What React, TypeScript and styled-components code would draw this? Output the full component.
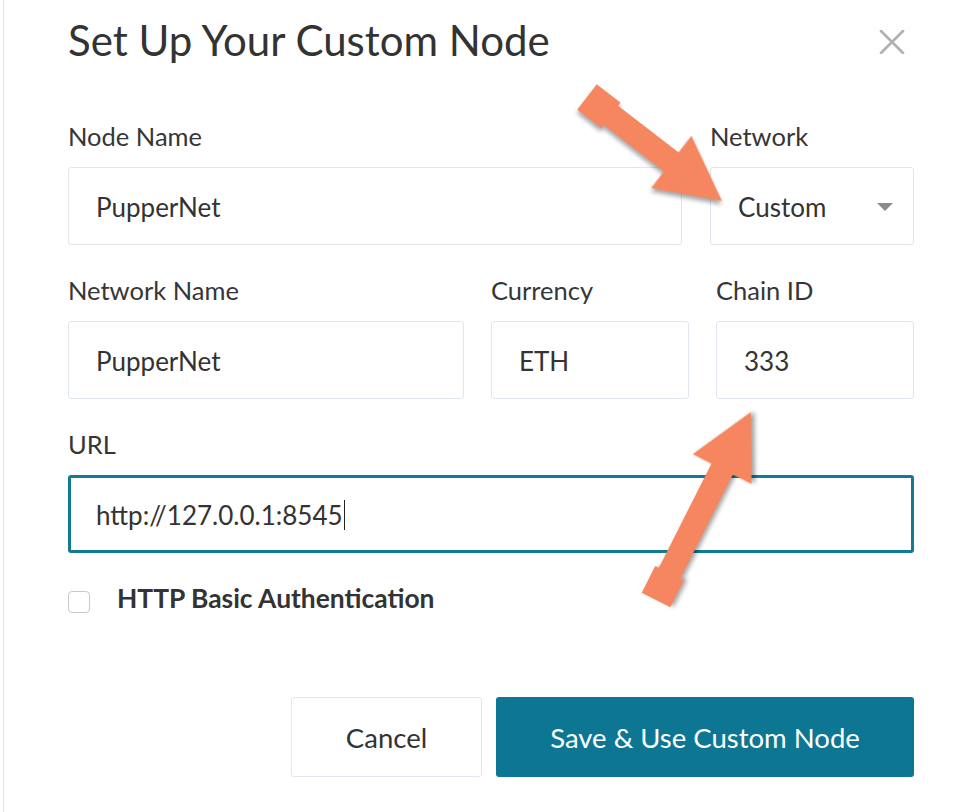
import React from "react";
import styled, { createGlobalStyle } from "styled-components";

const Global = createGlobalStyle`
  html, body { margin: 0; padding: 0; background: #fff; }
  body { font-family: Lato, "Open Sans", sans-serif; color: #333; }
  * { box-sizing: border-box; }
`;

const Page = styled.div`
  position: relative;
  width: 957px;
  height: 812px;
  overflow: hidden;
  background: #fff;
`;

const Modal = styled.div`
  margin-left: 3px;
  height: 100%;
  border-left: 1px solid #e4e4e4;
  padding: 15px 43px 0 64px;
  display: flex;
  flex-direction: column;
`;

const Header = styled.div`
  display: flex;
  justify-content: space-between;
  align-items: flex-start;
  margin-bottom: 56px;
`;

const Title = styled.h1`
  margin: 0;
  font-size: 42px;
  line-height: 50px;
  font-weight: 400;
  color: #333;
`;

const CloseButton = styled.button`
  border: 0;
  background: none;
  padding: 0;
  margin: 15px 9px 0 0;
  width: 26px;
  height: 24px;
  display: flex;
  cursor: pointer;
`;

const Row = styled.div<{ $cols: string; $gap: number }>`
  display: grid;
  grid-template-columns: ${(p) => p.$cols};
  column-gap: ${(p) => p.$gap}px;
  margin-bottom: 30px;
`;

const Group = styled.div`
  display: flex;
  flex-direction: column;
  min-width: 0;
`;

const Label = styled.div`
  font-size: 25.5px;
  line-height: 30px;
  color: #363636;
  margin-bottom: 16px;
`;

const Box = styled.div<{ $focused?: boolean }>`
  height: 78px;
  border: ${(p) => (p.$focused ? "3px solid #137a93" : "1px solid #dfe6ee")};
  border-radius: 3px;
  padding: 2px ${(p) => (p.$focused ? 25 : 27)}px 0;
  display: flex;
  align-items: center;
  justify-content: space-between;
  font-size: 26px;
  line-height: 30px;
  color: #333;
  background: #fff;
`;

const Caret = styled.span`
  display: inline-block;
  width: 1px;
  height: 30px;
  background: #222;
  margin-left: 1px;
  vertical-align: top;
`;

const Triangle = styled.span`
  width: 0;
  height: 0;
  border-left: 8px solid transparent;
  border-right: 8px solid transparent;
  border-top: 8px solid #8a8a8a;
  margin-right: -7px;
`;

const CheckRow = styled.label`
  display: flex;
  align-items: flex-start;
  font-size: 26.4px;
  line-height: 30px;
  font-weight: 700;
  color: #333;
`;

const CheckBox = styled.span`
  width: 22px;
  height: 22px;
  margin-top: 8px;
  margin-right: 27px;
  border: 1.5px solid #c8c8c8;
  border-radius: 4px;
  background: #fff;
`;

const Footer = styled.div`
  display: flex;
  justify-content: flex-end;
  gap: 14px;
  margin-top: 84px;
`;

const Button = styled.button<{ $primary?: boolean; $width: number }>`
  width: ${(p) => p.$width}px;
  height: 80px;
  border-radius: 3px;
  font-family: Lato, "Open Sans", sans-serif;
  font-size: 27.5px;
  cursor: pointer;
  border: ${(p) => (p.$primary ? "none" : "1px solid #e1e7ee")};
  background: ${(p) => (p.$primary ? "#0d7793" : "#fff")};
  color: ${(p) => (p.$primary ? "#fff" : "#333")};
`;

const Overlay = styled.svg`
  position: absolute;
  left: 0;
  top: 0;
  pointer-events: none;
`;

const ArrowShape = styled.polygon`
  fill: #f5865f;
  filter: drop-shadow(2px 3px 2px rgba(0, 0, 0, 0.35));
`;

function arrowPoints(L: number): string {
  const t = 30;
  const tw = 16;
  const sw = 12;
  const h = 64;
  const hw = 33;
  return [
    [0, -tw], [t, -tw], [t, -sw], [L - h, -sw], [L - h, -hw], [L, 0],
    [L - h, hw], [L - h, sw], [t, sw], [t, tw], [0, tw],
  ].map((p) => p.join(",")).join(" ");
}

function Arrow({ x1, y1, x2, y2 }: { x1: number; y1: number; x2: number; y2: number }) {
  const dx = x2 - x1;
  const dy = y2 - y1;
  const L = Math.sqrt(dx * dx + dy * dy);
  const a = (Math.atan2(dy, dx) * 180) / Math.PI;
  return (
    <g transform={`translate(${x1} ${y1}) rotate(${a})`}>
      <ArrowShape points={arrowPoints(L)} />
    </g>
  );
}

function Field({ label, value, focused, select }: { label: string; value: string; focused?: boolean; select?: boolean }) {
  return (
    <Group>
      <Label>{label}</Label>
      <Box $focused={focused}>
        <span>
          {value}
          {focused && <Caret />}
        </span>
        {select && <Triangle />}
      </Box>
    </Group>
  );
}

export default function App() {
  return (
    <>
      <Global />
      <Page>
        <Modal>
          <Header>
            <Title>Set Up Your Custom Node</Title>
            <CloseButton aria-label="Close">
              <svg width="26" height="24" viewBox="0 0 26 24">
                <path d="M2 1 L24 23 M24 1 L2 23" stroke="#b0b0b0" strokeWidth="2.6" strokeLinecap="round" />
              </svg>
            </CloseButton>
          </Header>
          <Row $cols="1fr 204px" $gap={28}>
            <Field label="Node Name" value="PupperNet" />
            <Field label="Network" value="Custom" select />
          </Row>
          <Row $cols="1fr 198px 198px" $gap={27}>
            <Field label="Network Name" value="PupperNet" />
            <Field label="Currency" value="ETH" />
            <Field label="Chain ID" value="333" />
          </Row>
          <Row $cols="1fr" $gap={0}>
            <Field label="URL" value="http://127.0.0.1:8545" focused />
          </Row>
          <CheckRow>
            <CheckBox />
            HTTP Basic Authentication
          </CheckRow>
          <Footer>
            <Button $width={191}>Cancel</Button>
            <Button $primary $width={418}>Save &amp; Use Custom Node</Button>
          </Footer>
        </Modal>
        <Overlay width="957" height="812" viewBox="0 0 957 812">
          <Arrow x1={587} y1={97} x2={722} y2={201} />
          <Arrow x1={656} y1={600} x2={751} y2={412} />
        </Overlay>
      </Page>
    </>
  );
}
